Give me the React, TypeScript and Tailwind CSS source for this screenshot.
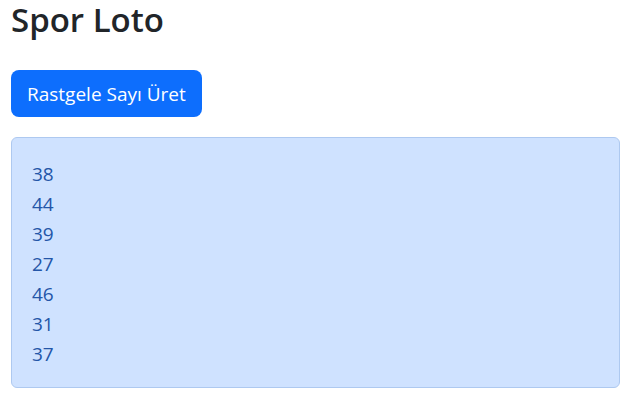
const numbers = [38, 44, 39, 27, 46, 31, 37];

const App = () => {
    return (
        <div className="min-h-screen bg-white pl-[11px] pr-[15px] font-['Open_Sans',sans-serif] text-[#212529]">
            <h1 className="mb-[6px] text-[33px] leading-[40px] font-semibold">Spor Loto</h1>
            <button
                type="button"
                className="mt-6 h-[47px] rounded-lg bg-[#0d6efd] px-4 text-[19px] leading-[30px] text-white"
            >
                Rastgele Sayı Üret
            </button>
            <div className="mt-[20px] rounded-md border border-[#aec9f0] bg-[#cfe2ff] px-5 pt-[21px] pb-[18px] text-[#2456a8]">
                <ul>
                    {numbers.map((n, i) => (
                        <li key={i} className="text-[19px] leading-[30px]">
                            {n}
                        </li>
                    ))}
                </ul>
            </div>
        </div>
    );
};

export default App;
